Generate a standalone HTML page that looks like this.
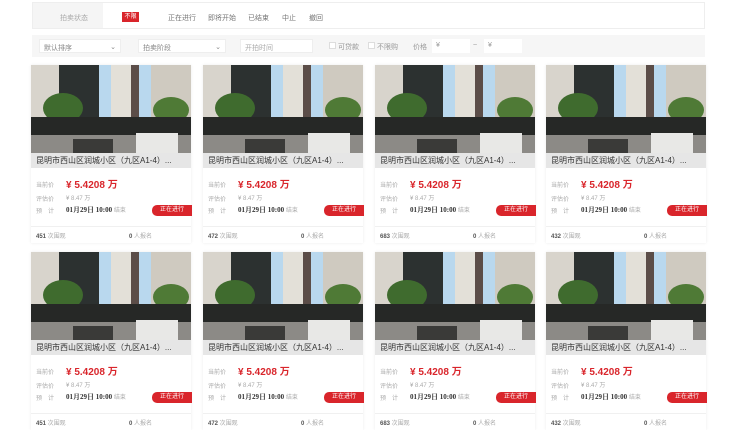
<!DOCTYPE html>
<html><head><meta charset="utf-8"><style>
*{margin:0;padding:0;box-sizing:border-box}
body{width:740px;height:420px;background:#fff;position:relative;overflow:hidden;font-family:"Liberation Sans","Noto Sans CJK SC",sans-serif;color:#999;font-size:7px}
.abs{position:absolute}
.card{position:absolute;width:160px;height:178px;background:#fff;box-shadow:0 0 3px rgba(0,0,0,.08)}
.img{position:absolute;left:0;top:0;width:160px;height:88px;overflow:hidden;background:#b9d8ee}
.img div{position:absolute}
.tt{position:absolute;left:0;top:88px;width:160px;height:15px;background:#e6e6e6;color:#333;font-size:8px;line-height:15px;padding-left:5px;white-space:nowrap}
.l{position:absolute;left:5px;font-size:6px;color:#aaa}
.pr{position:absolute;left:35px;top:111px;color:#d9252b;font-weight:bold;font-size:10px}
.ev{position:absolute;left:35px;top:128px;color:#aaa;font-size:6px}
.tm{position:absolute;left:35px;top:140px;color:#333;font-weight:bold;font-size:7px;font-family:"Liberation Serif","Noto Serif CJK SC",serif}
.tm span{font-weight:normal;color:#aaa;font-size:6px;font-family:"Liberation Sans","Noto Sans CJK SC",sans-serif}
.bd{position:absolute;right:-1px;top:140px;width:40px;height:11px;background:#d9252b;color:#fff;font-size:6px;line-height:11px;text-align:center;border-radius:5px 0 0 5px}
.st{position:absolute;top:161px;border-top:1px solid #f0f0f0;left:0;width:160px;height:17px;font-size:6px;color:#aaa}
.st b{color:#555}
</style></head><body>
<div class="abs" style="left:32px;top:2px;width:673px;height:27px;border:1px solid #eee;background:#fff"></div>
<div class="abs" style="left:33px;top:3px;width:70px;height:25px;background:#f5f5f5"></div>
<div class="abs" style="left:60px;top:13px;color:#aaa">拍卖状态</div>
<div class="abs" style="left:122px;top:12px;width:17px;height:10px;background:#d9252b;color:#fff;font-size:6px;line-height:10px;text-align:center">不限</div>
<div class="abs" style="left:168px;top:13px;color:#777">正在进行</div>
<div class="abs" style="left:208px;top:13px;color:#777">即将开始</div>
<div class="abs" style="left:248px;top:13px;color:#777">已结束</div>
<div class="abs" style="left:282px;top:13px;color:#777">中止</div>
<div class="abs" style="left:309px;top:13px;color:#777">撤回</div>
<div class="abs" style="left:32px;top:35px;width:673px;height:22px;background:#f6f6f6"></div>
<div class="abs" style="left:39px;top:39px;width:82px;height:14px;background:#fff;border:1px solid #eee;padding:3px 4px;color:#888">默认排序<span style="float:right">⌄</span></div>
<div class="abs" style="left:138px;top:39px;width:88px;height:14px;background:#fff;border:1px solid #eee;padding:3px 4px;color:#888">拍卖阶段<span style="float:right">⌄</span></div>
<div class="abs" style="left:240px;top:39px;width:73px;height:14px;background:#fff;border:1px solid #eee;padding:3px 4px;color:#aaa">开拍时间</div>
<div class="abs" style="left:329px;top:42px;width:7px;height:7px;border:1px solid #ddd;background:#fff"></div>
<div class="abs" style="left:338px;top:42px">可贷款</div>
<div class="abs" style="left:368px;top:42px;width:7px;height:7px;border:1px solid #ddd;background:#fff"></div>
<div class="abs" style="left:377px;top:42px">不限购</div>
<div class="abs" style="left:413px;top:42px">价格</div>
<div class="abs" style="left:432px;top:39px;width:38px;height:14px;background:#fff;padding:3px 4px">¥</div>
<div class="abs" style="left:473px;top:42px">~</div>
<div class="abs" style="left:484px;top:39px;width:38px;height:14px;background:#fff;padding:3px 4px">¥</div>

<!-- template repeated -->
<div id="c"></div>
<script></script>
<!-- cards -->
<div class="card" style="left:31px;top:65px"><div class="img"><div style="left:0;top:0;width:30px;height:60px;background:#d8d4cc"></div><div style="left:28px;top:0;width:40px;height:60px;background:#2c3130"></div><div style="left:80px;top:0;width:22px;height:60px;background:#e3e0d8"></div><div style="left:100px;top:0;width:8px;height:60px;background:#5b4d48"></div><div style="left:120px;top:0;width:40px;height:60px;background:#cfcac0"></div><div style="left:12px;top:28px;width:40px;height:30px;background:#3f6b2e;border-radius:50%"></div><div style="left:122px;top:32px;width:36px;height:26px;background:#4f7a36;border-radius:50%"></div><div style="left:0;top:52px;width:160px;height:18px;background:#262826"></div><div style="left:0;top:70px;width:160px;height:18px;background:#8c8a86"></div><div style="left:105px;top:68px;width:42px;height:20px;background:#e8e8e6"></div><div style="left:42px;top:74px;width:40px;height:14px;background:#3a3a38"></div></div><div class="tt">昆明市西山区润城小区（九区A1-4）...</div><div class="l" style="top:115px">当前价</div><div class="pr">¥ 5.4208 万</div><div class="l" style="top:129px">评估价</div><div class="ev">¥ 8.47 万</div><div class="l" style="top:141px">预　计</div><div class="tm">01月29日 10:00 <span>结束</span></div><div class="bd">正在进行</div><div class="st"><span class="abs" style="left:5px;top:4px"><b>451</b> 次围观</span><span class="abs" style="left:98px;top:4px"><b>0</b> 人报名</span></div></div>
<div class="card" style="left:203px;top:65px"><div class="img"><div style="left:0;top:0;width:30px;height:60px;background:#d8d4cc"></div><div style="left:28px;top:0;width:40px;height:60px;background:#2c3130"></div><div style="left:80px;top:0;width:22px;height:60px;background:#e3e0d8"></div><div style="left:100px;top:0;width:8px;height:60px;background:#5b4d48"></div><div style="left:120px;top:0;width:40px;height:60px;background:#cfcac0"></div><div style="left:12px;top:28px;width:40px;height:30px;background:#3f6b2e;border-radius:50%"></div><div style="left:122px;top:32px;width:36px;height:26px;background:#4f7a36;border-radius:50%"></div><div style="left:0;top:52px;width:160px;height:18px;background:#262826"></div><div style="left:0;top:70px;width:160px;height:18px;background:#8c8a86"></div><div style="left:105px;top:68px;width:42px;height:20px;background:#e8e8e6"></div><div style="left:42px;top:74px;width:40px;height:14px;background:#3a3a38"></div></div><div class="tt">昆明市西山区润城小区（九区A1-4）...</div><div class="l" style="top:115px">当前价</div><div class="pr">¥ 5.4208 万</div><div class="l" style="top:129px">评估价</div><div class="ev">¥ 8.47 万</div><div class="l" style="top:141px">预　计</div><div class="tm">01月29日 10:00 <span>结束</span></div><div class="bd">正在进行</div><div class="st"><span class="abs" style="left:5px;top:4px"><b>472</b> 次围观</span><span class="abs" style="left:98px;top:4px"><b>0</b> 人报名</span></div></div>
<div class="card" style="left:375px;top:65px"><div class="img"><div style="left:0;top:0;width:30px;height:60px;background:#d8d4cc"></div><div style="left:28px;top:0;width:40px;height:60px;background:#2c3130"></div><div style="left:80px;top:0;width:22px;height:60px;background:#e3e0d8"></div><div style="left:100px;top:0;width:8px;height:60px;background:#5b4d48"></div><div style="left:120px;top:0;width:40px;height:60px;background:#cfcac0"></div><div style="left:12px;top:28px;width:40px;height:30px;background:#3f6b2e;border-radius:50%"></div><div style="left:122px;top:32px;width:36px;height:26px;background:#4f7a36;border-radius:50%"></div><div style="left:0;top:52px;width:160px;height:18px;background:#262826"></div><div style="left:0;top:70px;width:160px;height:18px;background:#8c8a86"></div><div style="left:105px;top:68px;width:42px;height:20px;background:#e8e8e6"></div><div style="left:42px;top:74px;width:40px;height:14px;background:#3a3a38"></div></div><div class="tt">昆明市西山区润城小区（九区A1-4）...</div><div class="l" style="top:115px">当前价</div><div class="pr">¥ 5.4208 万</div><div class="l" style="top:129px">评估价</div><div class="ev">¥ 8.47 万</div><div class="l" style="top:141px">预　计</div><div class="tm">01月29日 10:00 <span>结束</span></div><div class="bd">正在进行</div><div class="st"><span class="abs" style="left:5px;top:4px"><b>683</b> 次围观</span><span class="abs" style="left:98px;top:4px"><b>0</b> 人报名</span></div></div>
<div class="card" style="left:546px;top:65px"><div class="img"><div style="left:0;top:0;width:30px;height:60px;background:#d8d4cc"></div><div style="left:28px;top:0;width:40px;height:60px;background:#2c3130"></div><div style="left:80px;top:0;width:22px;height:60px;background:#e3e0d8"></div><div style="left:100px;top:0;width:8px;height:60px;background:#5b4d48"></div><div style="left:120px;top:0;width:40px;height:60px;background:#cfcac0"></div><div style="left:12px;top:28px;width:40px;height:30px;background:#3f6b2e;border-radius:50%"></div><div style="left:122px;top:32px;width:36px;height:26px;background:#4f7a36;border-radius:50%"></div><div style="left:0;top:52px;width:160px;height:18px;background:#262826"></div><div style="left:0;top:70px;width:160px;height:18px;background:#8c8a86"></div><div style="left:105px;top:68px;width:42px;height:20px;background:#e8e8e6"></div><div style="left:42px;top:74px;width:40px;height:14px;background:#3a3a38"></div></div><div class="tt">昆明市西山区润城小区（九区A1-4）...</div><div class="l" style="top:115px">当前价</div><div class="pr">¥ 5.4208 万</div><div class="l" style="top:129px">评估价</div><div class="ev">¥ 8.47 万</div><div class="l" style="top:141px">预　计</div><div class="tm">01月29日 10:00 <span>结束</span></div><div class="bd">正在进行</div><div class="st"><span class="abs" style="left:5px;top:4px"><b>432</b> 次围观</span><span class="abs" style="left:98px;top:4px"><b>0</b> 人报名</span></div></div>
<div class="card" style="left:31px;top:252px"><div class="img"><div style="left:0;top:0;width:30px;height:60px;background:#d8d4cc"></div><div style="left:28px;top:0;width:40px;height:60px;background:#2c3130"></div><div style="left:80px;top:0;width:22px;height:60px;background:#e3e0d8"></div><div style="left:100px;top:0;width:8px;height:60px;background:#5b4d48"></div><div style="left:120px;top:0;width:40px;height:60px;background:#cfcac0"></div><div style="left:12px;top:28px;width:40px;height:30px;background:#3f6b2e;border-radius:50%"></div><div style="left:122px;top:32px;width:36px;height:26px;background:#4f7a36;border-radius:50%"></div><div style="left:0;top:52px;width:160px;height:18px;background:#262826"></div><div style="left:0;top:70px;width:160px;height:18px;background:#8c8a86"></div><div style="left:105px;top:68px;width:42px;height:20px;background:#e8e8e6"></div><div style="left:42px;top:74px;width:40px;height:14px;background:#3a3a38"></div></div><div class="tt">昆明市西山区润城小区（九区A1-4）...</div><div class="l" style="top:115px">当前价</div><div class="pr">¥ 5.4208 万</div><div class="l" style="top:129px">评估价</div><div class="ev">¥ 8.47 万</div><div class="l" style="top:141px">预　计</div><div class="tm">01月29日 10:00 <span>结束</span></div><div class="bd">正在进行</div><div class="st"><span class="abs" style="left:5px;top:4px"><b>451</b> 次围观</span><span class="abs" style="left:98px;top:4px"><b>0</b> 人报名</span></div></div>
<div class="card" style="left:203px;top:252px"><div class="img"><div style="left:0;top:0;width:30px;height:60px;background:#d8d4cc"></div><div style="left:28px;top:0;width:40px;height:60px;background:#2c3130"></div><div style="left:80px;top:0;width:22px;height:60px;background:#e3e0d8"></div><div style="left:100px;top:0;width:8px;height:60px;background:#5b4d48"></div><div style="left:120px;top:0;width:40px;height:60px;background:#cfcac0"></div><div style="left:12px;top:28px;width:40px;height:30px;background:#3f6b2e;border-radius:50%"></div><div style="left:122px;top:32px;width:36px;height:26px;background:#4f7a36;border-radius:50%"></div><div style="left:0;top:52px;width:160px;height:18px;background:#262826"></div><div style="left:0;top:70px;width:160px;height:18px;background:#8c8a86"></div><div style="left:105px;top:68px;width:42px;height:20px;background:#e8e8e6"></div><div style="left:42px;top:74px;width:40px;height:14px;background:#3a3a38"></div></div><div class="tt">昆明市西山区润城小区（九区A1-4）...</div><div class="l" style="top:115px">当前价</div><div class="pr">¥ 5.4208 万</div><div class="l" style="top:129px">评估价</div><div class="ev">¥ 8.47 万</div><div class="l" style="top:141px">预　计</div><div class="tm">01月29日 10:00 <span>结束</span></div><div class="bd">正在进行</div><div class="st"><span class="abs" style="left:5px;top:4px"><b>472</b> 次围观</span><span class="abs" style="left:98px;top:4px"><b>0</b> 人报名</span></div></div>
<div class="card" style="left:375px;top:252px"><div class="img"><div style="left:0;top:0;width:30px;height:60px;background:#d8d4cc"></div><div style="left:28px;top:0;width:40px;height:60px;background:#2c3130"></div><div style="left:80px;top:0;width:22px;height:60px;background:#e3e0d8"></div><div style="left:100px;top:0;width:8px;height:60px;background:#5b4d48"></div><div style="left:120px;top:0;width:40px;height:60px;background:#cfcac0"></div><div style="left:12px;top:28px;width:40px;height:30px;background:#3f6b2e;border-radius:50%"></div><div style="left:122px;top:32px;width:36px;height:26px;background:#4f7a36;border-radius:50%"></div><div style="left:0;top:52px;width:160px;height:18px;background:#262826"></div><div style="left:0;top:70px;width:160px;height:18px;background:#8c8a86"></div><div style="left:105px;top:68px;width:42px;height:20px;background:#e8e8e6"></div><div style="left:42px;top:74px;width:40px;height:14px;background:#3a3a38"></div></div><div class="tt">昆明市西山区润城小区（九区A1-4）...</div><div class="l" style="top:115px">当前价</div><div class="pr">¥ 5.4208 万</div><div class="l" style="top:129px">评估价</div><div class="ev">¥ 8.47 万</div><div class="l" style="top:141px">预　计</div><div class="tm">01月29日 10:00 <span>结束</span></div><div class="bd">正在进行</div><div class="st"><span class="abs" style="left:5px;top:4px"><b>683</b> 次围观</span><span class="abs" style="left:98px;top:4px"><b>0</b> 人报名</span></div></div>
<div class="card" style="left:546px;top:252px"><div class="img"><div style="left:0;top:0;width:30px;height:60px;background:#d8d4cc"></div><div style="left:28px;top:0;width:40px;height:60px;background:#2c3130"></div><div style="left:80px;top:0;width:22px;height:60px;background:#e3e0d8"></div><div style="left:100px;top:0;width:8px;height:60px;background:#5b4d48"></div><div style="left:120px;top:0;width:40px;height:60px;background:#cfcac0"></div><div style="left:12px;top:28px;width:40px;height:30px;background:#3f6b2e;border-radius:50%"></div><div style="left:122px;top:32px;width:36px;height:26px;background:#4f7a36;border-radius:50%"></div><div style="left:0;top:52px;width:160px;height:18px;background:#262826"></div><div style="left:0;top:70px;width:160px;height:18px;background:#8c8a86"></div><div style="left:105px;top:68px;width:42px;height:20px;background:#e8e8e6"></div><div style="left:42px;top:74px;width:40px;height:14px;background:#3a3a38"></div></div><div class="tt">昆明市西山区润城小区（九区A1-4）...</div><div class="l" style="top:115px">当前价</div><div class="pr">¥ 5.4208 万</div><div class="l" style="top:129px">评估价</div><div class="ev">¥ 8.47 万</div><div class="l" style="top:141px">预　计</div><div class="tm">01月29日 10:00 <span>结束</span></div><div class="bd">正在进行</div><div class="st"><span class="abs" style="left:5px;top:4px"><b>432</b> 次围观</span><span class="abs" style="left:98px;top:4px"><b>0</b> 人报名</span></div></div>
</body></html>
